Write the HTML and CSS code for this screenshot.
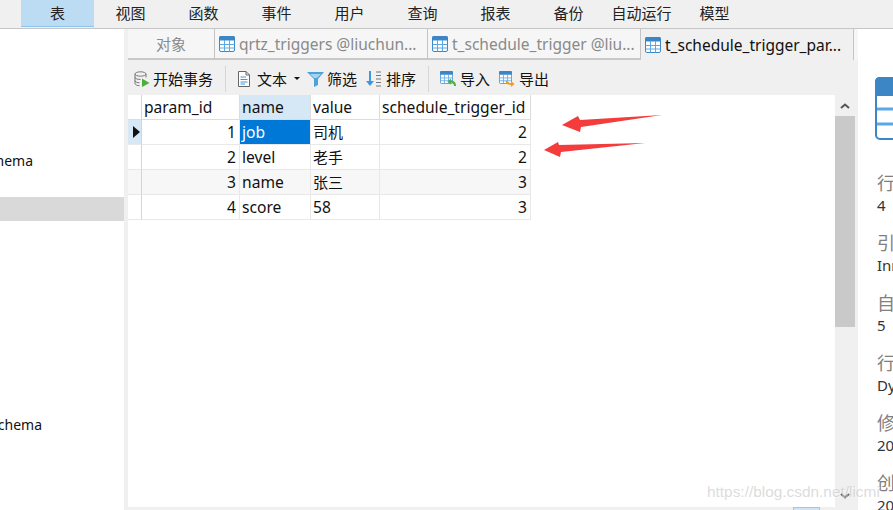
FILE: index.html
```html
<!DOCTYPE html>
<html lang="zh">
<head>
<meta charset="utf-8">
<title>t_schedule_trigger_param</title>
<link rel="stylesheet" href="styles.css">
</head>
<body>
<svg width="0" height="0" class="defs">
  <defs>
    <symbol id="tbl" viewBox="0 0 16 16">
      <rect x="0.5" y="0.5" width="15" height="15" rx="1.5" fill="#fff" stroke="#3d86c6"/>
      <rect x="0" y="0" width="16" height="4.5" rx="1.5" fill="#3d86c6"/>
      <path d="M0.5 8.5H15.5M0.5 12H15.5M5.5 4V15.5M10.5 4V15.5" stroke="#5aa9e6" fill="none"/>
    </symbol>
  </defs>
</svg>
<div class="app">
  <nav class="menubar">
    <span class="menu-edge"></span>
    <a class="menu-item active">表</a>
    <a class="menu-item">视图</a>
    <a class="menu-item">函数</a>
    <a class="menu-item">事件</a>
    <a class="menu-item">用户</a>
    <a class="menu-item">查询</a>
    <a class="menu-item">报表</a>
    <a class="menu-item">备份</a>
    <a class="menu-item">自动运行</a>
    <a class="menu-item">模型</a>
  </nav>
  <div class="workspace">
    <aside class="sidebar">
      <div class="tree-row r-first"><span>hema</span></div>
      <div class="tree-row r-selected"></div>
      <div class="tree-row r-last"><span>chema</span></div>
    </aside>
    <main class="main">
      <div class="tabs">
        <div class="tab tab-objects">对象</div>
        <div class="tab"><svg class="tab-icon"><use href="#tbl"/></svg><span class="tab-label">qrtz_triggers @liuchun...</span></div>
        <div class="tab"><svg class="tab-icon"><use href="#tbl"/></svg><span class="tab-label">t_schedule_trigger @liu...</span></div>
        <div class="tab tab-active"><svg class="tab-icon"><use href="#tbl"/></svg><span class="tab-label">t_schedule_trigger_par...</span></div>
      </div>
      <div class="toolbar">
        <div class="tool t-begin">
          <svg class="ico" viewBox="0 0 16 16"><ellipse cx="6.5" cy="3" rx="5.5" ry="2.2" fill="none" stroke="#777"/><path d="M1 3V12.5C1 13.8 3.5 14.7 5.5 14.7M12 3V6.5M1 6.3C1 7.6 3.5 8.5 6.5 8.5M1 9.6C1 10.9 3.5 11.8 5.5 11.8" fill="none" stroke="#777"/><path d="M8 7.5L15.5 12L8 16Z" fill="#4cae3c"/></svg>
          <span>开始事务</span>
        </div>
        <i class="sep"></i>
        <div class="tool t-text">
          <svg class="ico" viewBox="0 0 16 16"><path d="M2.5 .5H10L13.5 4V15.5H2.5Z" fill="#fff" stroke="#666"/><path d="M10 .5V4H13.5" fill="none" stroke="#666"/><path d="M4.5 6H10M4.5 8.5H11.5M4.5 11H11.5M4.5 13H9" stroke="#3f97df" fill="none"/></svg>
          <span>文本</span><b class="caret"></b>
        </div>
        <div class="tool t-filter">
          <svg class="ico ico-filter" viewBox="0 0 17 16"><path d="M0 1H17L11 8V14L7 16V8Z" fill="#4aa3df"/><path d="M3 3H14L10 7H7Z" fill="#a5d3f0"/></svg>
          <span>筛选</span>
        </div>
        <div class="tool t-sort">
          <svg class="ico ico-sort" viewBox="0 0 16 16"><path d="M4 0V11" stroke="#3f97df" stroke-width="2" fill="none"/><path d="M0 10H8L4 15Z" fill="#3f97df"/><path d="M10 1H15M10 4.500H15M10 8H15M10 11.500H15M10 15H15" stroke="#777" fill="none"/></svg>
          <span>排序</span>
        </div>
        <i class="sep"></i>
        <div class="tool t-import">
          <svg class="ico" viewBox="0 0 16 16"><use href="#tbl" width="13" height="13"/><path d="M15 15C15 11.500 13 10.500 10.500 10.500" stroke="#4cae3c" stroke-width="2" fill="none"/><path d="M7.500 10.500L11 7.500V13.500Z" fill="#4cae3c"/></svg>
          <span>导入</span>
        </div>
        <div class="tool t-export">
          <svg class="ico" viewBox="0 0 16 16"><use href="#tbl" width="13" height="13"/><path d="M7.500 10C8 12.500 10 13 12.500 13" stroke="#f39a1f" stroke-width="2" fill="none"/><path d="M15.500 13L12 10V16Z" fill="#f39a1f"/></svg>
          <span>导出</span>
        </div>
      </div>
      <div class="grid-area">
        <div class="grid">
          <div class="c h ind"></div><div class="c h">param_id</div><div class="c h h-sel">name</div><div class="c h">value</div><div class="c h">schedule_trigger_id</div>
          <div class="c ind ind-cur"><b class="cursor"></b></div><div class="c num">1</div><div class="c sel">job</div><div class="c cjk">司机</div><div class="c num">2</div>
          <div class="c ind"></div><div class="c num">2</div><div class="c">level</div><div class="c cjk">老手</div><div class="c num">2</div>
          <div class="c ind alt"></div><div class="c num alt">3</div><div class="c alt">name</div><div class="c cjk alt">张三</div><div class="c num alt">3</div>
          <div class="c ind"></div><div class="c num">4</div><div class="c">score</div><div class="c">58</div><div class="c num">3</div>
        </div>
        <div class="scrollbar">
          <svg class="sb-arrow" viewBox="0 0 10 6"><path d="M1 5L5 1.500L9 5" fill="none" stroke="#555" stroke-width="2"/></svg>
          <div class="sb-thumb"></div>
          <svg class="sb-arrow sb-down" viewBox="0 0 10 6"><path d="M1 1L5 4.500L9 1" fill="none" stroke="#555" stroke-width="2"/></svg>
        </div>
      </div>
      <div class="statusline"><span class="status-btn"></span></div>
    </main>
    <aside class="info">
      <svg class="info-icon" viewBox="0 0 40 64"><rect x="1" y="1" width="60" height="61" rx="4" fill="#fff" stroke="#3d86c6" stroke-width="2"/><path d="M0 5Q0 0 5 0H40V19H0Z" fill="#3d86c6"/><path d="M2 32H40M2 47H40" stroke="#5aa9e6" stroke-width="3"/></svg>
      <dl class="props">
        <dt>行数</dt><dd>4</dd>
        <dt>引擎</dt><dd>InnoDB</dd>
        <dt>自动递增</dt><dd>5</dd>
        <dt>行格式</dt><dd>Dynamic</dd>
        <dt>修改日期</dt><dd>2019-05-20</dd>
        <dt>创建日期</dt><dd>2019-05-20</dd>
      </dl>
    </aside>
  </div>
  <svg class="arrows" viewBox="0 0 893 510" aria-hidden="true">
    <path d="M562 125L578 116L580 120L662 115L581 127L580 132Z" fill="#f43c3c"/>
    <path d="M544 150L558 142L559 145L645 143L561 152L560 157Z" fill="#f43c3c"/>
  </svg>
  <div class="watermark">https://blog.csdn.net/licmi</div>
</div>
</body>
</html>
```
FILE: styles.css
```css
* { box-sizing: border-box; }
html, body { margin: 0; padding: 0; }
body {
  width: 893px;
  height: 510px;
  overflow: hidden;
  background: #fff;
  color: #111;
  font-family: "Noto Sans", "Noto Sans CJK SC", sans-serif;
  font-size: 15.6px;
}
.defs { position: absolute; }
.app { position: relative; width: 893px; height: 510px; display: flex; flex-direction: column; overflow: hidden; }

.menubar { height: 29px; flex: none; display: flex; background: #f0f0f0; border-bottom: 1px solid #c6c6c6; }
.menu-edge { width: 21px; flex: none; }
.menu-item { width: 73px; flex: none; text-align: center; line-height: 26px; height: 27px; font-family: "Noto Sans CJK SC", sans-serif; font-size: 15px; color: #222; }
.menu-item.active { background: #bcdcf3; border-bottom: 1px solid #8cc6f0; }

.workspace { flex: 1; display: flex; min-height: 0; }

.sidebar { width: 128px; flex: none; background: #fff; border-right: 4px solid #f0f0f0; padding-top: 120px; }
.tree-row { height: 24px; line-height: 24px; display: flex; justify-content: flex-end; white-space: nowrap; font-size: 14px; }
.tree-row span { flex: none; }
.r-first { width: 33px; }
.r-selected { background: #d9d9d9; margin-top: 24px; }
.r-last { margin-top: 192px; width: 42px; }

.main { width: 730px; flex: none; display: flex; flex-direction: column; background: #f0f0f0; }
.tabs { height: 31px; flex: none; display: flex; background: #f6f6f6; }
.tab { width: 213px; height: 31px; display: flex; align-items: center; padding-left: 4px; border-right: 1px solid #c4c4c4; border-bottom: 2px solid #c8c8c8; color: #8a8a8a; white-space: nowrap; font-size: 15.5px; }
.tab-objects { width: 87px; justify-content: center; padding-left: 0; font-family: "Noto Sans CJK SC", sans-serif; font-size: 15px; }
.tab-active { background: #f0f0f0; color: #111; border-bottom: 0; }
.tab-icon { width: 16px; height: 16px; margin-right: 4px; flex: none; }

.toolbar { height: 35px; flex: none; display: flex; align-items: center; padding: 2px 0 0 6px; font-family: "Noto Sans CJK SC", sans-serif; font-size: 15px; background: #f0f0f0; }
.tool { display: flex; align-items: center; gap: 3px; white-space: nowrap; }
.ico { width: 16px; height: 16px; flex: none; }
.sep { width: 1px; height: 26px; background: #d6d6d6; flex: none; }
.t-begin { margin-right: 12px; }
.t-text { margin-left: 10px; gap: 5px; }
.caret { width: 0; height: 0; border: 3px solid transparent; border-top: 3px solid #111; border-bottom: 0; margin-left: 2px; }
.t-filter { margin-left: 7px; gap: 3px; }
.ico-filter { width: 17px; }
.t-sort { margin-left: 9px; margin-right: 12px; gap: 4px; }
.t-import { margin-left: 11px; gap: 4px; }
.t-export { margin-left: 9px; gap: 4px; }

.grid-area { height: 412px; flex: none; display: flex; }
.grid {
  width: 707px;
  background: #fff;
  display: grid;
  grid-template-columns: 14px 98px 71px 69px 151px;
  grid-auto-rows: 25px;
  align-content: start;
  justify-content: start;
}
.c { border-right: 1px solid #e8e8e8; border-bottom: 1px solid #e8e8e8; padding: 0 2px; line-height: 24px; white-space: nowrap; overflow: hidden; }
.cjk { font-size: 15px; }
.h { border-color: #dcdcdc; }
.h-sel { background: #d6e8f6; }
.ind { padding: 0; border-right: 1px solid #d4d4d4; }
.ind-cur { background: #d6e8f6; display: flex; align-items: center; padding-left: 5px; }
.cursor { width: 0; height: 0; border-left: 7px solid #111; border-top: 6px solid transparent; border-bottom: 6px solid transparent; }
.num { text-align: right; padding-right: 3px; }
.sel { background: #0078d7; color: #fff; }
.alt { background: #f7f7f7; }

.scrollbar { width: 20px; flex: none; display: flex; flex-direction: column; align-items: center; background: #f0f0f0; }
.sb-arrow { width: 10px; height: 6px; margin: 8px 0 7px; flex: none; }
.sb-thumb { width: 20px; height: 211px; background: #c9c9c9; }
.sb-down { margin: auto 0 8px; }

.statusline { height: 3px; margin-top: auto; position: relative; }
.status-btn { position: absolute; right: 38px; top: 0; width: 27px; height: 3px; background: #cfe4f5; border: 1px solid #9cc7ea; border-bottom: 0; }

.info { flex: 1; min-width: 0; background: #fff; padding: 48px 0 0 17px; overflow: hidden; }
.info-icon { display: block; width: 40px; height: 64px; }
.props { margin: 28px 0 0 2px; white-space: nowrap; width: 120px; }
.props dt { font-family: "Noto Sans CJK SC", sans-serif; font-size: 18px; line-height: 26px; height: 30px; color: #808080; }
.props dd { margin: 0 0 17px; line-height: 13px; height: 13px; color: #333; font-size: 15px; }

.arrows { position: absolute; left: 0; top: 0; width: 893px; height: 510px; pointer-events: none; }
.watermark { position: absolute; left: 707px; top: 483px; font-family: "Liberation Sans", sans-serif; font-size: 15.4px; line-height: 18px; color: rgba(190,190,190,.55); text-shadow: 1px 1px 1px rgba(255,255,255,.6); white-space: nowrap; pointer-events: none; }
```
